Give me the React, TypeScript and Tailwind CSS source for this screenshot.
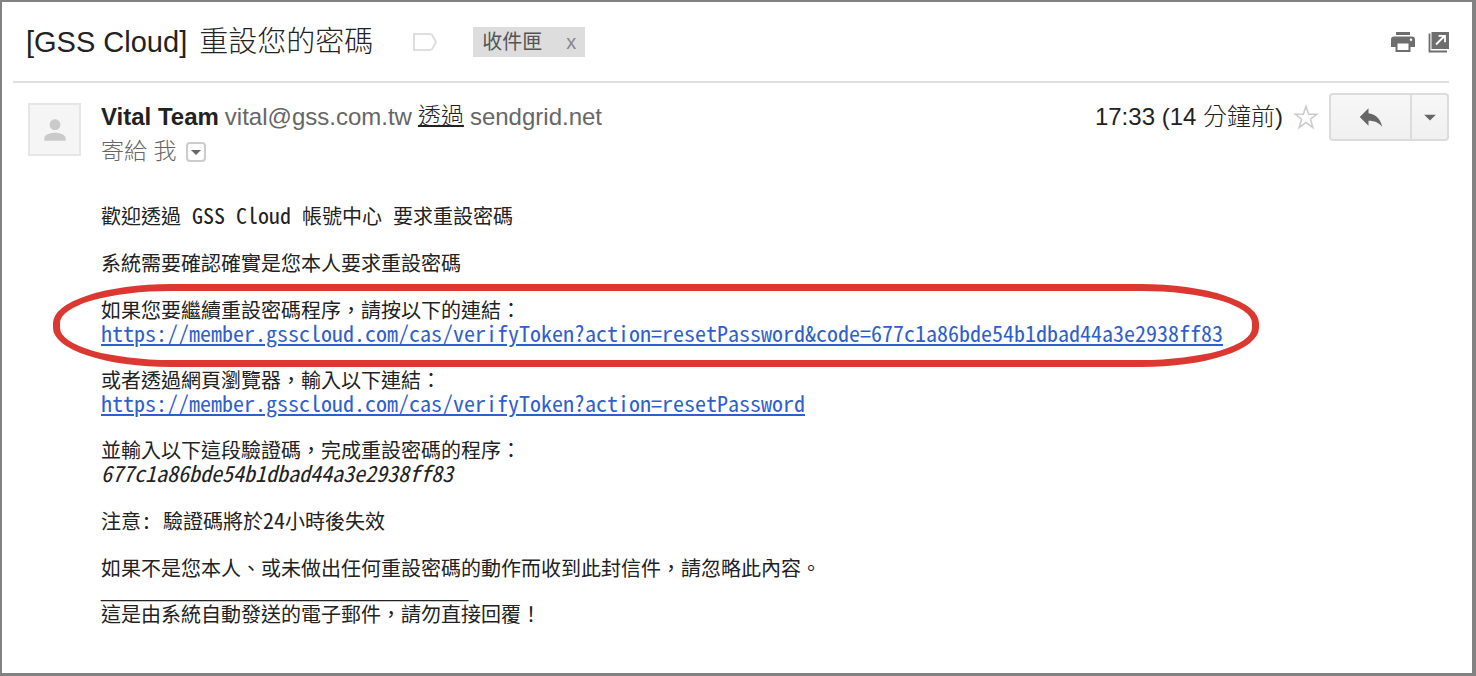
import { MdReply, MdPerson, MdArrowDropDown } from "react-icons/md";

const link = "text-[#2f5fcc] underline decoration-2 underline-offset-2 break-all";
const mono = "font-['Noto_Sans_Mono_CJK_TC','Liberation_Mono',monospace] text-[22px]";

function LabelIcon() {
  return (
    <svg viewBox="0 0 24 18" className="h-[18px] w-6" fill="none" stroke="#dedede" strokeWidth="2" aria-hidden="true">
      <path d="M1 1h16c1 0 1.800.4 2.300 1.200L23 9l-3.700 6.800c-.5.8-1.300 1.200-2.300 1.200H1z" />
    </svg>
  );
}

function PrintIcon() {
  return (
    <svg viewBox="0 0 24 22" className="h-[22px] w-6" aria-hidden="true">
      <path d="M5 1h14v3H5z" fill="#6e6e6e" />
      <path
        d="M3 5.500h18a3 3 0 0 1 3 3V16h-4.500v5h-15v-5H0V8.500a3 3 0 0 1 3-3z"
        fill="#6e6e6e"
      />
      <path d="M6.500 12.500h11v6.500h-11z" fill="#fff" />
      <circle cx="20" cy="8.700" r="1.200" fill="#fff" />
    </svg>
  );
}

function NewWindowIcon() {
  return (
    <svg viewBox="0 0 22 22" className="h-[22px] w-[22px]" aria-hidden="true">
      <path d="M4.500 1H22v17H4.500z" fill="#6e6e6e" />
      <path d="M2.500 2.500v18H20" fill="none" stroke="#6e6e6e" strokeWidth="1.800" />
      <path d="M9 13.500l8.500-8.500M11.500 4.800H18v6.500" fill="none" stroke="#fff" strokeWidth="1.800" />
    </svg>
  );
}

function StarIcon() {
  return (
    <svg viewBox="0 0 26 26" className="h-[26px] w-[26px]" fill="none" stroke="#cccccc" strokeWidth="1.600" aria-hidden="true">
      <path d="M13 2.500l2.700 7.700h8.200l-6.500 5 2.400 8.200L13 18.600l-6.800 4.800 2.400-8.200-6.500-5h8.200z" />
    </svg>
  );
}

export default function App() {
  return (
    <div className="min-h-screen border-2 border-r-4 border-b-[3px] border-[#828282] bg-white font-['Liberation_Sans','Noto_Sans_CJK_TC',sans-serif] text-[#222]">
      <header className="ml-[11px] mr-[23px] flex h-[81px] items-center border-b-2 border-[#e0e0e0] pl-[13px]">
        <h1 className="flex gap-3 text-[29px] font-light leading-10">
          <span>[GSS Cloud]</span>
          <span>重設您的密碼</span>
        </h1>
        <button type="button" aria-label="標籤" className="ml-10">
          <LabelIcon />
        </button>
        <div className="ml-9 flex h-[30px] items-center bg-[#ddd] px-[9px] text-[20px] text-[#555]">
          <span>收件匣</span>
          <button type="button" aria-label="移除標籤" className="ml-6 text-[#888]">
            x
          </button>
        </div>
        <div className="ml-auto flex items-center gap-3">
          <button type="button" aria-label="列印">
            <PrintIcon />
          </button>
          <button type="button" aria-label="在新視窗中開啟">
            <NewWindowIcon />
          </button>
        </div>
      </header>

      <section className="ml-[26px] mr-[23px] flex items-start pt-[10px]">
        <div className="mt-[10px] flex h-[53px] w-[53px] shrink-0 items-center justify-center border-2 border-[#e6e6e6] bg-[#f5f5f5]">
          <MdPerson size={32} color="#cacaca" />
        </div>
        <div className="ml-5 pt-[6px]">
          <div className="flex h-[35px] items-center gap-[6px] whitespace-nowrap text-[24px] text-[#666]">
            <b className="text-[#222]">Vital Team</b>
            <span>vital@gss.com.tw</span>
            <a href="#via" className="text-[23px] font-light text-[#222] underline decoration-2">
              透過
            </a>
            <span>sendgrid.net</span>
          </div>
          <div className="flex h-[35px] items-center gap-[10px] text-[23px] font-light text-[#666]">
            <span>寄給 我</span>
            <button
              type="button"
              aria-label="顯示詳細資料"
              className="flex h-5 w-5 items-center justify-center rounded-sm border-2 border-[#ccc] text-[#666]"
            >
              <MdArrowDropDown size={24} className="shrink-0" />
            </button>
          </div>
        </div>
        <div className="ml-auto flex items-center">
          <time className="text-[24px] font-light">17:33 (14 分鐘前)</time>
          <button type="button" aria-label="加上星號" className="ml-[10px]">
            <StarIcon />
          </button>
          <div className="ml-[10px] flex h-12 w-[120px] rounded-sm border-2 border-[#dcdcdc] bg-linear-to-b from-[#f7f7f7] to-[#f0f0f0] text-[#666]">
            <button type="button" aria-label="回覆" className="flex flex-1 items-center justify-center">
              <MdReply size={30} />
            </button>
            <button
              type="button"
              aria-label="更多"
              className="flex w-[37px] items-center justify-center border-l-2 border-[#dcdcdc]"
            >
              <MdArrowDropDown size={28} />
            </button>
          </div>
        </div>
      </section>

      <main className="ml-[99px] mr-5 mt-[34px] flex flex-col items-start gap-6 pb-10 font-['Noto_Sans_Mono_CJK_TC','Noto_Sans_CJK_TC',monospace] text-[20px] leading-[23px]">
        <p>
          歡迎透過<span className={mono}> GSS Cloud </span>帳號中心<span className={mono}> </span>要求重設密碼
        </p>
        <p>系統需要確認確實是您本人要求重設密碼</p>
        <div className="relative">
          <p>如果您要繼續重設密碼程序，請按以下的連結：</p>
          <p className={mono}>
            <a
              className={link}
              href="https://member.gsscloud.com/cas/verifyToken?action=resetPassword&code=677c1a86bde54b1dbad44a3e2938ff83"
            >
              https://member.gsscloud.com/cas/verifyToken?action=resetPassword&amp;code=677c1a86bde54b1dbad44a3e2938ff83
            </a>
          </p>
          <div
            aria-hidden="true"
            className="pointer-events-none absolute -bottom-[23px] -left-12 -right-9 -top-[14px] border-[7px] border-[#db3832] [border-radius:118px/39px]"
          />
        </div>
        <div>
          <p>或者透過網頁瀏覽器，輸入以下連結：</p>
          <p className={mono}>
            <a className={link} href="https://member.gsscloud.com/cas/verifyToken?action=resetPassword">
              https://member.gsscloud.com/cas/verifyToken?action=resetPassword
            </a>
          </p>
        </div>
        <div>
          <p>並輸入以下這段驗證碼，完成重設密碼的程序：</p>
          <p className={`${mono} italic`}>677c1a86bde54b1dbad44a3e2938ff83</p>
        </div>
        <p>
          注意<span className={mono}>: </span>驗證碼將於<span className={mono}>24</span>小時後失效
        </p>
        <div>
          <p>如果不是您本人、或未做出任何重設密碼的動作而收到此封信件，請忽略此內容。</p>
          <p className="font-['Liberation_Sans',sans-serif]">_________________________________</p>
          <p>這是由系統自動發送的電子郵件，請勿直接回覆！</p>
        </div>
      </main>
    </div>
  );
}
